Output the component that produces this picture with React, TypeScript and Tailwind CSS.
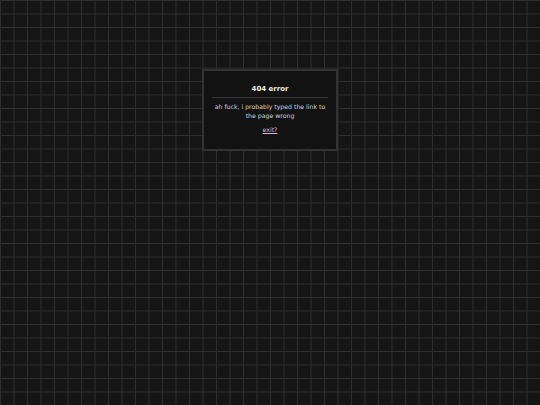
export default function App() {
  return (
    <div className="min-h-screen w-full antialiased bg-[#151515] bg-[linear-gradient(to_right,#2f2f2f_1px,transparent_1px),linear-gradient(to_bottom,#2f2f2f_1px,transparent_1px)] bg-[size:13.5px_13.5px] font-['DejaVu_Sans',sans-serif]">
      <div className="flex justify-center pt-[69px]">
        <div className="w-[136px] h-[82px] bg-[#121212] border-2 border-[#333333] flex flex-col items-center px-[8px] pt-[13px]">
          <h1 className="text-[7px] font-bold text-[#ececec] leading-[10px]">404 error</h1>
          <div className="w-full h-px bg-[#383838] mt-[3px] mb-[4px]" />
          <p className="text-[6.2px] text-[#d4d4d4] text-center leading-[9px]">
            ah fuck, i probably typed the link to the page wrong
          </p>
          <a href="#" className="mt-[5px] text-[6.2px] text-[#e0b4d0] underline leading-[9px]">
            exit?
          </a>
        </div>
      </div>
    </div>
  );
}
